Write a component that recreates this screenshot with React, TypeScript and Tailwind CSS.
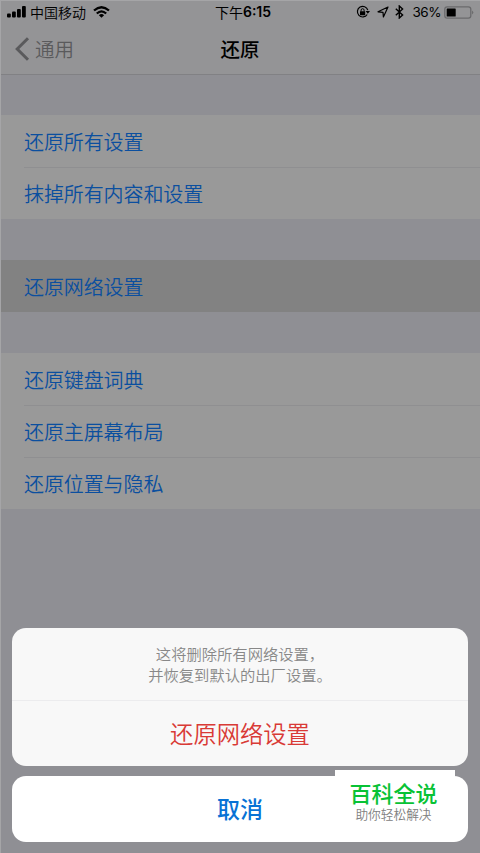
import React from "react";

const sans = "font-['Noto_Sans_CJK_SC','Liberation_Sans',sans-serif]";

function StatusBar() {
  return (
    <div className="flex h-[24px] items-center justify-between pl-[7px] pr-[6px] text-black">
      <div className="flex w-[180px] items-center">
        <svg width="19" height="12" viewBox="0 0 19 12" fill="currentColor">
          <rect x="0" y="7.5" width="3.8" height="4" rx="1" />
          <rect x="5" y="5.6" width="3.8" height="5.9" rx="1" />
          <rect x="10" y="3" width="3.8" height="8.5" rx="1" />
          <rect x="15" y="0" width="3.8" height="11.5" rx="1" />
        </svg>
        <span className="ml-1 text-[14px] font-[350] leading-[20px]">中国移动</span>
        <svg className="ml-[7px]" width="17" height="12" viewBox="0 0 17 12" fill="none" stroke="currentColor" strokeWidth="2.3">
          <path d="M1 4.5 Q8.5 -2 16 4.5" />
          <path d="M3.8 7.5 Q8.5 3.2 13.2 7.5" />
          <path d="M8.5 11.8 L5.9 9.2 Q8.5 7 11.1 9.2Z" fill="currentColor" stroke="none" />
        </svg>
      </div>
      <div className="ml-[5px] flex items-center text-[14px] leading-[20px]">
        <span>下午</span>
        <span className="font-['Inter',sans-serif] font-semibold">6:15</span>
      </div>
      <div className="flex w-[180px] items-center justify-end">
        <svg width="14" height="14" viewBox="0 0 14 14" fill="none" stroke="currentColor">
          <path d="M11.2 9.5 A5.3 5.3 0 1 1 11.8 5.2" strokeWidth="1.2" />
          <path d="M9.6 6 H14 L11.8 8.8Z" fill="currentColor" stroke="none" />
          <rect x="4" y="6.2" width="5.2" height="4" rx=".4" fill="currentColor" stroke="none" />
          <path d="M5.1 6.5 V5.2 a1.5 1.5 0 0 1 3 0 V6.5" strokeWidth="1" />
        </svg>
        <svg className="ml-[7px]" width="12" height="12" viewBox="0 0 12 12" fill="none" stroke="currentColor" strokeWidth="1.2" strokeLinejoin="round">
          <path d="M11 1 L1 5.8 L6 6.3 L6.4 11Z" />
        </svg>
        <svg className="ml-[6px]" width="9" height="14" viewBox="0 0 9 14" fill="none" stroke="currentColor" strokeWidth="1.4">
          <path d="M0.8 3.8 L7.6 10 L4.3 13 V1 L7.6 4 L0.8 10.2" />
        </svg>
        <span className="ml-[8px] font-['Inter',sans-serif] text-[13.5px] leading-[20px] tracking-[-0.45px]">36%</span>
        <svg className="ml-[3px]" width="30" height="13" viewBox="0 0 30 13">
          <rect x="0.8" y="0.8" width="26" height="11.4" rx="2.4" fill="none" stroke="#6a6a6c" strokeWidth="1.3" />
          <rect x="2.7" y="2.5" width="9" height="8" rx="0.6" fill="#000" />
          <path d="M28.3 4.5 Q30.2 6.5 28.3 8.5Z" fill="#5b5b5d" />
        </svg>
      </div>
    </div>
  );
}

function Group({ items, selected = false }: { items: string[]; selected?: boolean }) {
  return (
    <div className={selected ? "bg-[#828282]" : "bg-[#999999]"}>
      {items.map((item, i) => (
        <div key={item} className="pl-6">
          <div
            className={
              "flex h-[52px] items-center pt-px text-[20px] font-[350] leading-[28px] tracking-[-0.1px] text-[#0b4f9f] " +
              (i > 0 ? "border-t border-[#8f8f91]" : "")
            }
          >
            {item}
          </div>
        </div>
      ))}
    </div>
  );
}

export default function App() {
  return (
    <div className={"relative flex h-[853px] w-[480px] flex-col overflow-hidden bg-[#8f8f94] " + sans}>
      <header className="h-[75px] shrink-0 border-b border-[#818184] bg-[#949496]">
        <StatusBar />
        <div className="grid h-[50px] grid-cols-3 items-center">
          <div className="flex items-center pl-[15px] text-[19.5px] font-[350] leading-[28px] text-[#5a5a5c]">
            <svg className="mr-[5px]" width="15" height="24" viewBox="0 0 15 24" fill="none" stroke="currentColor" strokeWidth="3">
              <path d="M13 1.2 L2.2 12 L13 22.8" />
            </svg>
            通用
          </div>
          <h1 className="text-center text-[19.5px] font-medium leading-[28px] text-black">还原</h1>
        </div>
      </header>
      <main className="flex flex-col gap-[41px] pt-[40px]">
        <Group items={["还原所有设置", "抹掉所有内容和设置"]} />
        <Group items={["还原网络设置"]} selected />
        <Group items={["还原键盘词典", "还原主屏幕布局", "还原位置与隐私"]} />
      </main>

      <div className="absolute inset-0 border-l border-t border-[#a5a5a7]" />
      <section className="absolute inset-x-[12px] bottom-[11px] flex flex-col gap-[10px] text-center">
        <div className="h-[138px] rounded-[14px] bg-[#f8f8f8]">
          <p className="h-[73px] border-b border-[#ececee] pt-[15px] text-[15.3px] font-[350] leading-[21px] text-[#888888]">
            这将删除所有网络设置，
            <br />
            并恢复到默认的出厂设置。
          </p>
          <button className="h-[65px] w-full pb-[2px] text-[23.3px] font-[350] leading-[32px] text-[#d93a36]">还原网络设置</button>
        </div>
        <button className="h-[66px] w-full rounded-[14px] bg-white pb-[2px] text-[23px] font-medium leading-[32px] text-[#0872d5]">
          取消
        </button>
      </section>
      <aside className="absolute left-[335px] top-[770px] flex h-[60px] w-[120px] flex-col items-center bg-white pr-[3px] pt-[6px]">
        <strong className="text-[22px] font-medium leading-[32px] text-[#08c235]">百科全说</strong>
        <span className="-mt-px text-[12.7px] font-[350] leading-[14px] text-[#808080]">助你轻松解决</span>
      </aside>
    </div>
  );
}
